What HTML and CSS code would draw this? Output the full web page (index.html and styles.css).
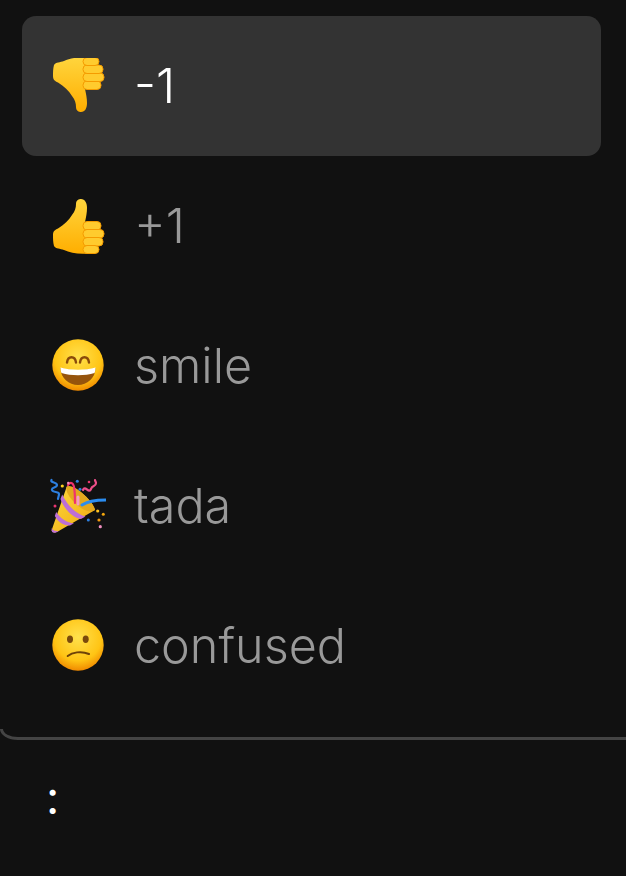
FILE: index.html
```html
<!DOCTYPE html>
<html lang="en">
<head>
    <meta charset="UTF-8">
    <meta name="viewport" content="width=device-width, initial-scale=1.0">
    <title>Emoji picker</title>
    <link rel="stylesheet" href="styles.css">
</head>
<body>
    <div class="menu">
        <div class="item selected">
            <svg class="emoji" viewBox="0 0 56 56">
                <defs>
                    <linearGradient id="handDown" x1="0" y1="1" x2="0" y2="0">
                        <stop offset="0" stop-color="#ffd53d"/>
                        <stop offset="1" stop-color="#ffae00"/>
                    </linearGradient>
                </defs>
                <g transform="translate(0,55) scale(1,-1)">
                    <path fill="url(#handDown)" d="M3 37C3 33 5 32 8 30.500C14 27 19 22 22 17C25 13 26 10 26 6C26 2 29 1 31 1C35 1 37 5 37 10C37 15 36 19 35 24L38 25V55.500C28 56.500 20 54.500 14 52C10 50.500 6 51 4 48C3 44 3 41 3 37Z"/>
                    <g fill="#ffcb2e" stroke="#f59b00" stroke-width="1">
                        <rect x="33" y="23.500" width="18" height="8.500" rx="4"/>
                        <rect x="33" y="31.500" width="21" height="8.500" rx="4"/>
                        <rect x="33" y="39.500" width="20" height="8.500" rx="4"/>
                        <rect x="33" y="47.500" width="16" height="8" rx="4"/>
                    </g>
                </g>
            </svg>
            <span>-1</span>
        </div>
        <div class="item">
            <svg class="emoji" viewBox="0 0 56 56">
                <defs>
                    <linearGradient id="handUp" x1="0" y1="0" x2="0" y2="1">
                        <stop offset="0" stop-color="#ffd53d"/>
                        <stop offset="1" stop-color="#ffae00"/>
                    </linearGradient>
                </defs>
                <path fill="url(#handUp)" d="M3 37C3 33 5 32 8 30.500C14 27 19 22 22 17C25 13 26 10 26 6C26 2 29 1 31 1C35 1 37 5 37 10C37 15 36 19 35 24L38 25V55.500C28 56.500 20 54.500 14 52C10 50.500 6 51 4 48C3 44 3 41 3 37Z"/>
                <g fill="#ffcb2e" stroke="#f59b00" stroke-width="1">
                    <rect x="33" y="23.500" width="18" height="8.500" rx="4"/>
                    <rect x="33" y="31.500" width="21" height="8.500" rx="4"/>
                    <rect x="33" y="39.500" width="20" height="8.500" rx="4"/>
                    <rect x="33" y="47.500" width="16" height="8" rx="4"/>
                </g>
            </svg>
            <span>+1</span>
        </div>
        <div class="item">
            <svg class="emoji" viewBox="0 0 56 56">
                <defs>
                    <radialGradient id="faceSmile" cx="0.5" cy="0.35" r="0.65">
                        <stop offset="0" stop-color="#ffe14d"/>
                        <stop offset="0.7" stop-color="#ffc414"/>
                        <stop offset="1" stop-color="#f08a00"/>
                    </radialGradient>
                </defs>
                <circle cx="28" cy="27" r="25.700" fill="url(#faceSmile)"/>
                <path d="M17 24.500C18 17.500 25 17.500 26 24.500M30 24.500C31 17.500 38 17.500 39 24.500" fill="none" stroke="#8a4b0a" stroke-width="2.400" stroke-linecap="round"/>
                <path d="M10.500 30C21 33 35 33 45.500 30C45.500 40 37 47 28 47C19 47 10.500 40 10.500 30Z" fill="#96540c"/>
                <path d="M10.500 29.500C21 32.500 35 32.500 45.500 29.500C45.500 32 45 34 44.500 35C35 38 21 38 11.500 35C11 34 10.500 32 10.500 29.500Z" fill="#fff"/>
            </svg>
            <span>smile</span>
        </div>
        <div class="item">
            <svg class="emoji" viewBox="0 0 56 56">
                <defs>
                    <linearGradient id="cone" x1="0" y1="0" x2="1" y2="1">
                        <stop offset="0" stop-color="#ffd83d"/>
                        <stop offset="1" stop-color="#eeaa10"/>
                    </linearGradient>
                </defs>
                <path d="M1.700 52C1.500 54 4 55 7 54L45 32C44 27 38 20 32 15C26 10 20 7 16.700 8.700Z" fill="url(#cone)"/>
                <path d="M16.700 8.700C15 13 20 21 27 27C34 33 41 35 45 32C44 27 38 20 32 15C26 10 20 7 16.700 8.700Z" fill="#e3a81e"/>
                <path d="M1.700 50C3 53 6 53 8.500 53L6 54.500C3 55.500 1.500 54 1.700 52Z" fill="#c071d6"/>
                <path d="M4.800 38C8 44 14 48 20 47.500L24 45.200C17 45 10 40 6.200 34Z" fill="#bd6fd6"/>
                <path d="M10.500 21C13 29 22 40 31 41L35.500 38.500C26 36 17 27 12.200 16.500Z" fill="#bd6fd6"/>
                <g fill="none" stroke-linecap="round" stroke-linejoin="round" stroke-width="2.200">
                    <path d="M1.500 2C0 5 7 4 7 7C7 10 1 9 2 12C3 15 9 13 9 16C9 18 8 20 8 21" stroke="#2d7fe0"/>
                    <path d="M18 7C20 4 23 4 24 9C25 14 25 20 25 25" stroke="#f0326e"/>
                    <path d="M32 27C38 23 46 22 55.500 22" stroke="#2b8df0" stroke-width="3"/>
                    <path d="M33 12C35 7 39 16 41 11C42 7 46 9 46 5C46 4 45 3 45 2" stroke="#ee4f8a"/>
                    <path d="M28 26V19" stroke="#f59ac4" stroke-width="3"/>
                </g>
                <g>
                    <circle cx="12.300" cy="8" r="1.600" fill="#ffd21f"/>
                    <circle cx="27.300" cy="3.300" r="1.500" fill="#2d7fe0"/>
                    <circle cx="18.300" cy="5" r="1.300" fill="#f08fc0"/>
                    <circle cx="39" cy="4" r="1.300" fill="#e8366e"/>
                    <circle cx="30" cy="11.300" r="1.500" fill="#2d7fe0"/>
                    <circle cx="5" cy="28" r="1.500" fill="#e8366e"/>
                    <circle cx="47.700" cy="33" r="1.600" fill="#ffc21f"/>
                    <circle cx="53.300" cy="36.300" r="1.500" fill="#f5a70c"/>
                    <circle cx="49" cy="42" r="1.600" fill="#f59a0c"/>
                    <circle cx="38.300" cy="42" r="1.500" fill="#2d7fe0"/>
                    <circle cx="50.300" cy="48.700" r="1.600" fill="#f08fc0"/>
                </g>
            </svg>
            <span>tada</span>
        </div>
        <div class="item">
            <svg class="emoji" viewBox="0 0 56 56">
                <defs>
                    <radialGradient id="faceConfused" cx="0.5" cy="0.35" r="0.65">
                        <stop offset="0" stop-color="#ffe14d"/>
                        <stop offset="0.7" stop-color="#ffc414"/>
                        <stop offset="1" stop-color="#f08a00"/>
                    </radialGradient>
                </defs>
                <circle cx="28" cy="27" r="25.700" fill="url(#faceConfused)"/>
                <ellipse cx="20" cy="21.300" rx="3" ry="3.700" fill="#7b4a0c"/>
                <ellipse cx="35.700" cy="21.300" rx="3" ry="3.700" fill="#7b4a0c"/>
                <path d="M17.700 38C22 34.500 31 32.500 39 36" fill="none" stroke="#6e4208" stroke-width="2" stroke-linecap="round"/>
            </svg>
            <span>confused</span>
        </div>
        <div class="menu-edge"></div>
    </div>
    <div class="composer">:</div>
</body>
</html>
```

FILE: styles.css
```css
body {
    margin: 0;
    background-color: #111;
    font-family: "Inter", "Liberation Sans", sans-serif;
}

.menu {
    padding: 16px 0 0;
}

.item {
    height: 140px;
    margin: 0 25px 0 22px;
    padding-left: 28px;
    display: flex;
    align-items: center;
    gap: 28px;
    font-size: 48.5px;
    font-weight: 350;
    color: #999;
    border-radius: 14px;
}

.item span {
    margin-bottom: 1px;
}

.item.selected {
    background-color: #333;
    color: white;
}

.emoji {
    width: 56px;
    height: 56px;
    flex-shrink: 0;
}

/* the rounded corner of the box under the list, cut off by the window */
.menu-edge {
    height: 8px;
    margin-top: 13px;
    border-left: 3px solid #444;
    border-bottom: 3px solid #444;
    border-radius: 0 0 0 18px / 0 0 0 11px;
}

.composer {
    padding: 23px 0 0 46px;
    font-size: 46px;
    line-height: 68px;
    color: white;
}
```
